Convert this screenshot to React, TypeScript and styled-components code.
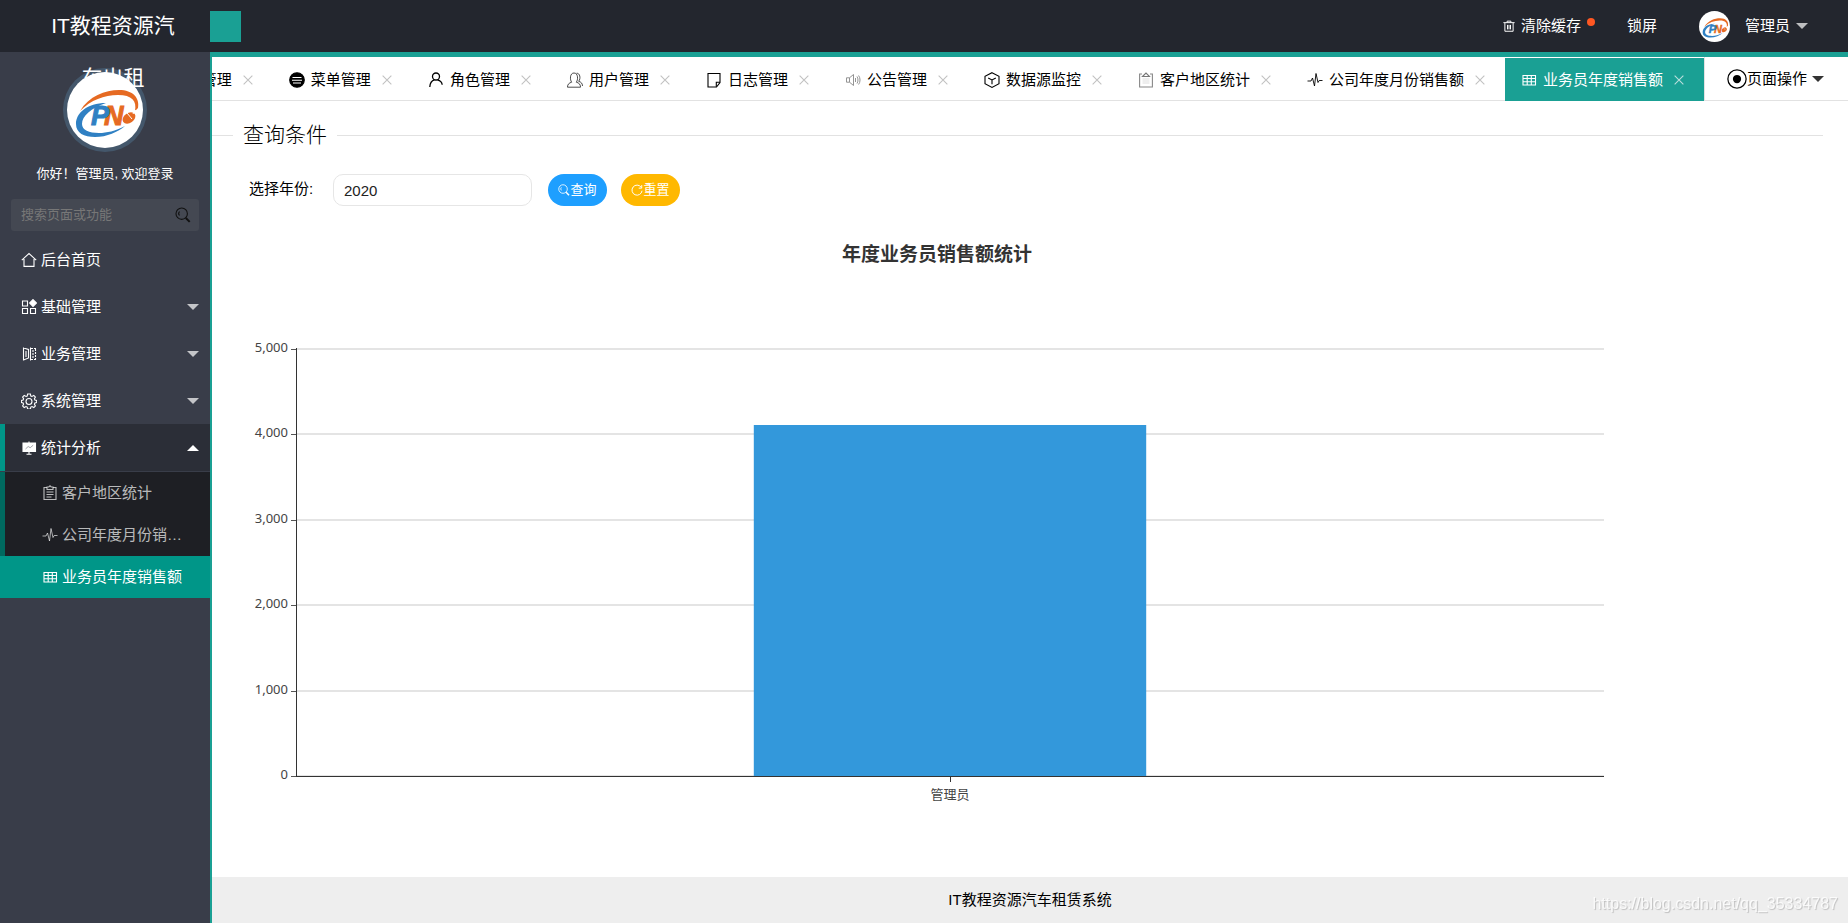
import React, { useState } from "react";
import styled, { createGlobalStyle, css } from "styled-components";

const colors = {
  header: "#23262e",
  side: "#393d49",
  teal: "#1aa094",
  activeTeal: "#009688",
  line: "#e2e2e2",
  faded: "rgba(255, 255, 255, 0.7)",
};

const GlobalStyle = createGlobalStyle`
  *, *::before, *::after { box-sizing: border-box; }
  body {
    margin: 0;
    font-family: "Liberation Sans", "Noto Sans CJK SC", sans-serif;
    font-size: 15px;
    line-height: 20px;
    color: #000;
    background: #fff;
  }
  button, input { font: inherit; color: inherit; }
  button { border: 0; padding: 0; background: none; cursor: pointer; white-space: nowrap; }
  a { color: inherit; text-decoration: none; }
  ul { list-style: none; margin: 0; padding: 0; }
`;

/* ---------- icons ---------- */

const Svg = styled.svg<{ $size?: number }>`
  display: block;
  flex: none;
  width: ${(p) => p.$size ?? 16}px;
  height: ${(p) => p.$size ?? 16}px;
  fill: none;
  stroke: currentColor;
  stroke-width: 1.1;
`;

type IconName =
  | "home" | "grid" | "book" | "gear" | "board" | "clipboard" | "pulse" | "table"
  | "lines" | "person" | "people" | "note" | "speaker" | "cube" | "paste"
  | "target" | "trash" | "search" | "refresh" | "close";

const shapes: Record<IconName, React.ReactNode> = {
  home: <path d="M0.8 8.2 8 1.5l7.2 6.7M3 7v7.4h10V7" />,
  grid: (
    <>
      <path d="M1.5 2h5v5h-5zM1.5 9.5h5v5h-5zM9.5 9.5h5v5h-5z" />
      <path d="M12 0.6 15.4 4 12 7.4 8.6 4z" fill="currentColor" />
    </>
  ),
  book: (
    <>
      <path d="M2.500 1.500v13M2.500 2l5 1.500V12l-5 2M5 5v6" />
      <path d="M9.500 1.500v13" />
      <path d="M10 2.500h5M10 13.500h5M12 4v8.500M14.500 3v10.500" strokeDasharray="2 1" />
    </>
  ),
  gear: (
    <>
      <path d="m6.600 1 2.800 0 .4 2 1.200.5 1.800-1.100 1.600 1.700-1 1.700.5 1.200 1.800.5v2l-1.800.5-.5 1.300 1 1.700-1.600 1.600-1.800-1-1.200.5-.4 1.900H6.600l-.4-1.900-1.200-.5-1.800 1-1.600-1.600 1-1.700-.5-1.300L.4 9.500V7.500L2.100 7l.5-1.200-1-1.700 1.600-1.700L5 3.500 6.200 3z" />
      <circle cx="8" cy="8.500" r="3" />
    </>
  ),
  board: (
    <>
      <path d="M2 3h12.500v8.500H2z" fill="currentColor" />
      <path d="M8 1.500V3M8 12v2M5.500 14.300h5" />
      <path d="m4.500 9 2.700-2.500 2 1.200 3-2.500" stroke="#8b8e96" strokeWidth="0.8" />
    </>
  ),
  clipboard: (
    <>
      <path d="M5 2.500H2v12h12v-12h-3" />
      <path d="M5 2h1.800L8 0.800 9.200 2H11v2.500H5zM4.500 7h7M4.500 9.500h7M4.500 12h5" />
    </>
  ),
  pulse: <path d="M0.500 9H4l1.500-3 2 8L9 1.500l2 9 1.200-2h3.300" strokeWidth="0.900" />,
  table: <path d="M2 3.500h12.500v9.500H2zM2 6.500h12.500M2 9.800h12.500M6.200 3.500v9.500M10.300 3.500v9.500" />,
  lines: (
    <>
      <circle cx="8" cy="8" r="7.300" fill="currentColor" />
      <path d="M3.500 5.500h9M3 8.200h10M4 11h8" stroke="#fff" />
    </>
  ),
  person: (
    <>
      <circle cx="8" cy="4.500" r="3.500" strokeWidth="1.300" />
      <path d="M1.800 15C2 11 3.800 8.500 6.500 7.800M9.500 7.800c2.700.7 4.500 3.200 4.700 5" strokeWidth="1.300" />
    </>
  ),
  people: (
    <g strokeWidth="0.700">
      <path d="M0.500 15.200c0-3 1.600-4.300 4.200-5C2.800 8 2.700 1 7 1s4.200 7 2.300 9.200c2.600.7 4.200 2 4.200 5z" />
      <path d="M9.500 1.300c3.300-.6 4.600 5 2.200 8 2.200.6 3.800 2 3.800 4.700" />
    </g>
  ),
  note: (
    <>
      <path d="M2 1.500h12v9L10.500 15H2z" strokeWidth="1.100" />
      <path d="M10.300 14.800v-4.600h3.700" strokeWidth="1.100" />
    </>
  ),
  speaker: (
    <g stroke="#888" strokeWidth="0.900">
      <path d="M1.500 5.800h3L8.500 2.500v11l-4-3.300h-3zM4.500 5.800v4.400" />
      <path d="M10.500 6v4M12 4.500c1.300 2 1.300 5 0 7M13.600 3.500c1.900 2.500 1.900 6.500 0 9" />
    </g>
  ),
  cube: (
    <>
      <path d="M8 0.700 15 4.300v7.400L8 15.400 1 11.700V4.300z" />
      <path d="M4.200 6 8 8l3.800-2M8 8v4.300" />
    </>
  ),
  paste: (
    <>
      <path d="M4 2H1.600v13h12.800V2H12" stroke="#888" />
      <path d="M4.500 6h7v6h-7z" fill="#eee" stroke="none" />
      <path d="M4.500 4.500 8 1l3.500 3.500z" stroke="#777" />
    </>
  ),
  target: (
    <>
      <circle cx="8" cy="8" r="7.300" strokeWidth="1" />
      <circle cx="8" cy="8" r="3.300" fill="currentColor" stroke="none" />
    </>
  ),
  trash: <path d="M0.500 3.500h15M5.500 3.500V1.500h5v2M2.500 4v11h11V4M6 6.500v6M8 6.500v6M10 6.500v6" strokeWidth="1.300" />,
  search: (
    <>
      <circle cx="6.700" cy="6.700" r="5.700" />
      <path d="M4.500 4.500a3 3 0 0 0 0 4" />
      <path d="m10.800 11 3.900 3.900" strokeWidth="2" />
    </>
  ),
  refresh: <path d="M13.500 4.300A6.700 6.700 0 1 0 14.700 9M14.300 1.500v4h-4" strokeWidth="1.300" />,
  close: <path d="m3 3 10 10M13 3 3 13" strokeWidth="1.300" />,
};

const Icon = ({ name, size }: { name: IconName; size?: number }) => (
  <Svg viewBox="0 0 16 16" $size={size} aria-hidden="true">{shapes[name]}</Svg>
);

const LogoSvg = styled.svg`
  display: block;
  width: 100%;
  height: 100%;
  font-family: "Liberation Sans", sans-serif;
  font-weight: bold;
  font-style: italic;
  font-size: 27px;
`;

const PnLogo = () => (
  <LogoSvg viewBox="0 0 76 76" role="img" aria-label="PN">
    <path fill="#2f80c3" d="M39 31C20 31 9 41 9 52c0 9 8 13 19 13 12 0 23-5 30-11-10 5-18 7-26 7-10 0-17-3-17-9 0-8 9-16 24-21z" />
    <text x="37" y="53" fill="#e66a22" stroke="#e66a22" strokeWidth="1">N</text>
    <text x="24" y="53" fill="#2f80c3" stroke="#2f80c3" strokeWidth="1">P</text>
    <path fill="#e66a22" d="M13 39C22 24 38 18 52 18c14 0 21 8 19 18l-3 3c2-10-3-16-17-16-14 0-27 5-38 16z" />
    <ellipse cx="62" cy="46" rx="7" ry="5" fill="#e66a22" transform="rotate(-35 62 46)" />
    <path d="m60 41 5 6M66 42c1-3 2-2 3-4" stroke="#fff" strokeWidth="1" fill="none" />
  </LogoSvg>
);

const Caret = styled.span<{ $up?: boolean; $color?: string }>`
  width: 0;
  height: 0;
  flex: none;
  border: 6px solid transparent;
  ${(p) =>
    p.$up
      ? css`border-top-width: 0; border-bottom-color: ${p.$color ?? "#fff"};`
      : css`border-bottom-width: 0; border-top-color: ${p.$color ?? colors.faded};`}
`;

/* ---------- shell ---------- */

const Shell = styled.div`
  min-height: 100vh;
  display: flex;
  flex-direction: column;
`;

const Header = styled.header`
  position: relative;
  z-index: 1;
  display: flex;
  align-items: center;
  height: 52px;
  color: #fff;
  background: ${colors.header};
`;

const SiteName = styled.a`
  flex: none;
  width: 210px;
  height: 52px;
  padding: 0 32px 0 48px;
  font-size: 21px;
  line-height: 52px;
  text-align: center;
`;

const SideToggle = styled.button`
  width: 31px;
  height: 31px;
  margin-top: 1px;
  background: ${colors.teal};
`;

const UserNav = styled.nav`
  display: flex;
  align-items: center;
  gap: 46px;
  margin-left: auto;
  padding-right: 40px;
`;

const NavLink = styled.a`
  position: relative;
  display: flex;
  align-items: center;
  gap: 6px;
`;

const Dot = styled.span`
  position: absolute;
  top: 2px;
  right: -14px;
  width: 8px;
  height: 8px;
  border-radius: 50%;
  background: #ff5722;
`;

const SmallAvatar = styled.span`
  width: 31px;
  height: 31px;
  margin: 0 9px 0 -4px;
  border-radius: 50%;
  background: #fff;
`;

const Body = styled.div`
  flex: 1;
  display: flex;
`;

/* ---------- sidebar ---------- */

const Sidebar = styled.aside`
  flex: none;
  width: 210px;
  color: #fff;
  background: ${colors.side};
`;

const Profile = styled.div`
  display: flex;
  flex-direction: column;
  align-items: center;
  padding-top: 16px;
  font-size: 13px;
`;

const AvatarRing = styled.div`
  width: 84px;
  height: 84px;
  padding: 4px;
  margin-bottom: 12px;
  border-radius: 50%;
  background: #44576b;
`;

const Avatar = styled.div`
  position: relative;
  z-index: 2;
  height: 100%;
  border-radius: 50%;
  background: #fff;
`;

const SideSearch = styled.form`
  display: flex;
  align-items: center;
  height: 32px;
  margin: 15px 11px 5px;
  padding: 0 8px 0 10px;
  border-radius: 3px;
  background: #444852;
  input {
    flex: 1;
    min-width: 0;
    height: 32px;
    padding: 0 0 2px;
    border: 0;
    outline: 0;
    background: none;
    font-size: 13px;
  }
  input::placeholder { color: #777; opacity: 1; }
  button { color: #111; }
`;

const MenuButton = styled.button<{ $open?: boolean }>`
  display: flex;
  align-items: center;
  gap: 4px;
  width: 100%;
  height: 47px;
  padding: 0 11px 0 ${(p) => (p.$open ? 16 : 21)}px;
  border-left: ${(p) => (p.$open ? 5 : 0)}px solid ${colors.activeTeal};
  background: ${(p) => (p.$open ? "#2b2e37" : "none")};
  ${Caret} { margin-left: auto; }
`;

const SubMenu = styled.ul`
  margin-top: 1px;
  background: #1e1f24;
`;

const SubLink = styled.a<{ $active?: boolean }>`
  display: flex;
  align-items: center;
  gap: 4px;
  height: 42px;
  padding: 0 27px 0 37px;
  border-left: 5px solid ${(p) => (p.$active ? colors.activeTeal : "#00695f")};
  color: ${(p) => (p.$active ? "#fff" : colors.faded)};
  background: ${(p) => (p.$active ? colors.activeTeal : "none")};
  span {
    overflow: hidden;
    white-space: nowrap;
    text-overflow: ellipsis;
  }
`;

/* ---------- main ---------- */

const Main = styled.main`
  flex: 1;
  min-width: 0;
  display: flex;
  flex-direction: column;
  border-top: 5px solid ${colors.teal};
  border-left: 2px solid ${colors.teal};
`;

const TabBar = styled.div`
  display: flex;
  height: 44px;
  border-bottom: 1px solid ${colors.line};
`;

const Tabs = styled.ul`
  flex: 1;
  min-width: 0;
  display: flex;
  justify-content: flex-end;
  overflow: hidden;
  padding-top: 1px;
  margin-bottom: -1px;
`;

const Tab = styled.li<{ $active?: boolean }>`
  flex: none;
  display: flex;
  align-items: center;
  gap: 9px;
  padding: 0 18px 0 16px;
  color: ${(p) => (p.$active ? "#fff" : "#000")};
  background: ${(p) => (p.$active ? colors.teal : "none")};
`;

const TabLabel = styled.button`
  display: flex;
  align-items: center;
  gap: 6px;
  height: 100%;
`;

const CloseButton = styled.button<{ $active?: boolean }>`
  color: ${(p) => (p.$active ? "#b9dedb" : "#c2c2c2")};
`;

const PageActions = styled.button`
  flex: none;
  display: flex;
  align-items: center;
  width: 144px;
  padding-left: 22px;
  border-left: 1px solid ${colors.line};
  ${Caret} { margin-left: 5px; }
`;

const QueryForm = styled.form`
  margin: 18px 25px 0 0;
`;

const QuerySet = styled.fieldset`
  margin: 0;
  padding: 23px 0 0 37px;
  border: 0;
  border-top: 1px solid ${colors.line};
  legend {
    margin-left: -16px;
    padding: 0 10px;
    font-size: 21px;
    font-weight: 300;
    line-height: 32px;
  }
`;

const QueryRow = styled.div`
  display: flex;
  align-items: center;
  label { width: 84px; padding-bottom: 2px; }
`;

const YearInput = styled.input`
  width: 199px;
  height: 32px;
  margin-right: 16px;
  padding: 0 10px;
  border: 1px solid #e6e6e6;
  border-radius: 10px;
  outline: 0;
  color: #222;
`;

const PillButton = styled.button<{ $color: string }>`
  display: flex;
  align-items: center;
  justify-content: center;
  width: 59px;
  height: 32px;
  margin-right: 14px;
  padding-bottom: 1px;
  border-radius: 16px;
  font-size: 13px;
  color: #fff;
  background: ${(p) => p.$color};
`;

const ChartBox = styled.section`
  flex: 1;
  margin: 35px 186px 0 0;
  h2 {
    margin: 0 0 71px;
    font-size: 19px;
    line-height: 28px;
    text-align: center;
    color: #333;
  }
`;

const PlotArea = styled.div`
  margin: 0 58px 0 84px;
`;

const Plot = styled.svg`
  display: block;
  width: 100%;
  height: 470px;
  overflow: visible;
  font-family: "Noto Sans", "Noto Sans CJK SC", sans-serif;
  font-size: 13px;
  fill: #444;
`;

const Footer = styled.footer`
  height: 46px;
  line-height: 46px;
  text-align: center;
  background: #eee;
`;

const Watermark = styled.span`
  position: fixed;
  right: 10px;
  bottom: 9px;
  z-index: 3;
  font-size: 16px;
  color: rgba(255, 255, 255, 0.8);
  text-shadow: 1px 1px 1px rgba(0, 0, 0, 0.2);
`;

const menu: { label: string; icon: IconName; leaf?: boolean }[] = [
  { label: "后台首页", icon: "home", leaf: true },
  { label: "基础管理", icon: "grid" },
  { label: "业务管理", icon: "book" },
  { label: "系统管理", icon: "gear" },
];

const reports: { label: string; icon: IconName }[] = [
  { label: "客户地区统计", icon: "clipboard" },
  { label: "公司年度月份销售额", icon: "pulse" },
  { label: "业务员年度销售额", icon: "table" },
];

const tabs: { label: string; icon?: IconName }[] = [
  { label: "管理" },
  { label: "菜单管理", icon: "lines" },
  { label: "角色管理", icon: "person" },
  { label: "用户管理", icon: "people" },
  { label: "日志管理", icon: "note" },
  { label: "公告管理", icon: "speaker" },
  { label: "数据源监控", icon: "cube" },
  { label: "客户地区统计", icon: "paste" },
  { label: "公司年度月份销售额", icon: "pulse" },
  { label: "业务员年度销售额", icon: "table" },
];

const sales = [{ name: "管理员", value: 4115 }];
const axis = { top: 9, bottom: 436, max: 5000 };
const yOf = (value: number) =>
  Math.round(axis.bottom - (value / axis.max) * (axis.bottom - axis.top));

const SalesChart = () => (
  <Plot role="img" aria-label="年度业务员销售额统计">
    {[5000, 4000, 3000, 2000, 1000, 0].map((v) => (
      <g key={v}>
        <rect x="0" y={yOf(v) - 1} width="100%" height="2" fill="#e4e4e4" />
        <rect x="-5" y={yOf(v)} width="5" height="1" fill="#555" />
        <text x="-8" y={yOf(v) + 3} textAnchor="end">{v.toLocaleString("en-US")}</text>
      </g>
    ))}
    {sales.map((s) => (
      <g key={s.name}>
        <rect x="35%" y={yOf(s.value)} width="30%" height={axis.bottom - yOf(s.value)} fill="#3398db" />
        <rect x="50%" y={axis.bottom} width="1" height="6" fill="#333" />
        <text x="50%" y={axis.bottom + 23} textAnchor="middle">{s.name}</text>
      </g>
    ))}
    <rect x="0" y={axis.bottom} width="100%" height="1" fill="#333" />
    <rect x="0" y={axis.top - 1} width="1" height={axis.bottom - axis.top + 2} fill="#333" />
  </Plot>
);

export default function App() {
  const [year, setYear] = useState("2020");
  const current = "业务员年度销售额";

  return (
    <Shell>
      <GlobalStyle />
      <Header>
        <SiteName href="#">IT教程资源汽车出租</SiteName>
        <SideToggle type="button" aria-label="折叠菜单" />
        <UserNav>
          <NavLink href="#">
            <Icon name="trash" size={12} />
            清除缓存
            <Dot />
          </NavLink>
          <NavLink href="#">锁屏</NavLink>
          <NavLink href="#">
            <SmallAvatar><PnLogo /></SmallAvatar>
            管理员
            <Caret />
          </NavLink>
        </UserNav>
      </Header>

      <Body>
        <Sidebar>
          <Profile>
            <AvatarRing><Avatar><PnLogo /></Avatar></AvatarRing>
            <span>你好！管理员, 欢迎登录</span>
          </Profile>
          <SideSearch onSubmit={(e) => e.preventDefault()}>
            <input aria-label="搜索页面或功能" placeholder="搜索页面或功能" />
            <button type="submit" aria-label="搜索"><Icon name="search" /></button>
          </SideSearch>
          <nav>
            {menu.map((m) => (
              <MenuButton key={m.label} type="button">
                <Icon name={m.icon} />
                {m.label}
                {!m.leaf && <Caret />}
              </MenuButton>
            ))}
            <MenuButton type="button" $open>
              <Icon name="board" />
              统计分析
              <Caret $up />
            </MenuButton>
            <SubMenu>
              {reports.map((r) => (
                <li key={r.label}>
                  <SubLink href="#" $active={r.label === current}>
                    <Icon name={r.icon} />
                    <span>{r.label}</span>
                  </SubLink>
                </li>
              ))}
            </SubMenu>
          </nav>
        </Sidebar>

        <Main>
          <TabBar>
            <Tabs>
              {tabs.map((t) => (
                <Tab key={t.label} $active={t.label === current}>
                  <TabLabel type="button">
                    {t.icon && <Icon name={t.icon} />}
                    {t.label}
                  </TabLabel>
                  <CloseButton type="button" aria-label="关闭" $active={t.label === current}>
                    <Icon name="close" size={14} />
                  </CloseButton>
                </Tab>
              ))}
            </Tabs>
            <PageActions type="button">
              <Icon name="target" size={20} />
              页面操作
              <Caret $color="#333" />
            </PageActions>
          </TabBar>

          <QueryForm onSubmit={(e) => e.preventDefault()}>
            <QuerySet>
              <legend>查询条件</legend>
              <QueryRow>
                <label htmlFor="year">选择年份:</label>
                <YearInput id="year" value={year} onChange={(e) => setYear(e.target.value)} />
                <PillButton type="submit" $color="#1e9fff">
                  <Icon name="search" size={12} />查询
                </PillButton>
                <PillButton type="button" $color="#ffb800" onClick={() => setYear("")}>
                  <Icon name="refresh" size={12} />重置
                </PillButton>
              </QueryRow>
            </QuerySet>
          </QueryForm>

          <ChartBox>
            <h2>年度业务员销售额统计</h2>
            <PlotArea><SalesChart /></PlotArea>
          </ChartBox>

          <Footer>IT教程资源汽车租赁系统</Footer>
        </Main>
      </Body>
      <Watermark>https://blog.csdn.net/qq_35334787</Watermark>
    </Shell>
  );
}
